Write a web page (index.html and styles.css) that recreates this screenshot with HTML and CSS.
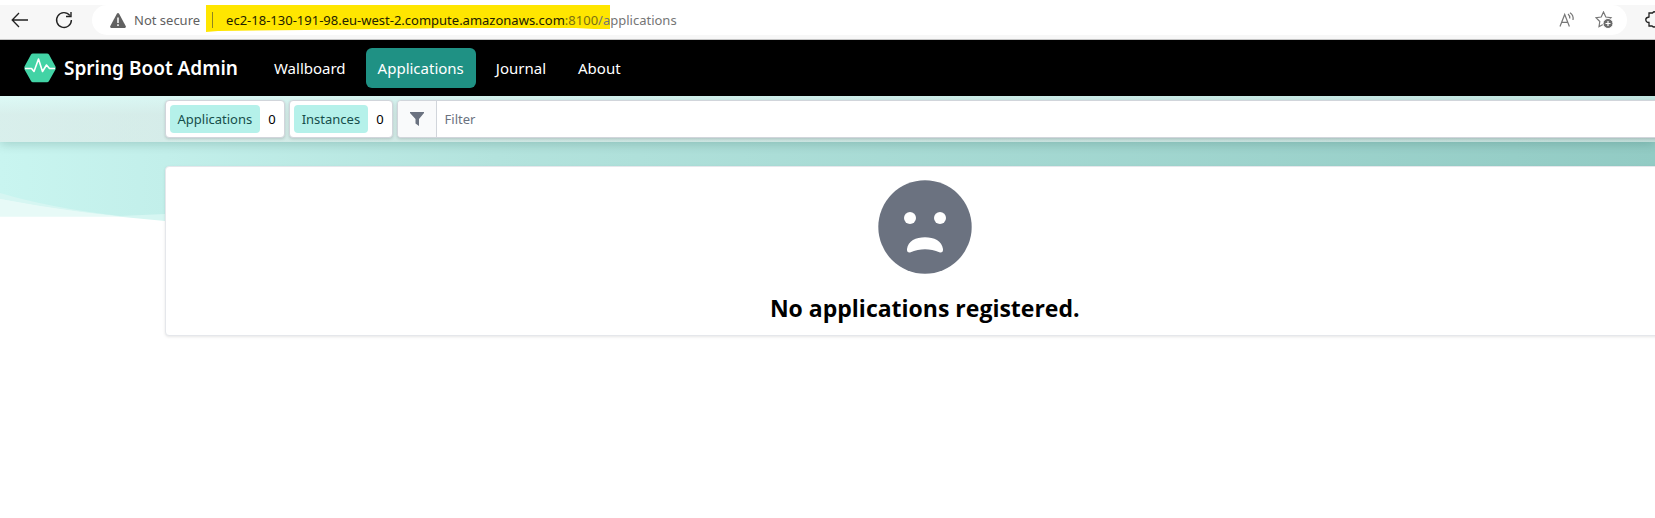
FILE: index.html
```html
<!DOCTYPE html>
<html lang="en">
<head>
<meta charset="utf-8">
<title>Spring Boot Admin</title>
<link rel="stylesheet" href="styles.css">
</head>
<body>
<div class="browser">
  <button class="tool" aria-label="Back"><svg width="18" height="16" viewBox="0 0 18 16"><path d="M17 8H1.500M8 1L1.200 8L8 15" fill="none" stroke="#222" stroke-width="1.300"/></svg></button>
  <button class="tool" aria-label="Refresh"><svg width="18" height="18" viewBox="0 0 18 18"><path d="M16.400 9A7.400 7.400 0 1 1 14.800 4.400M16 1V5.500H11" fill="none" stroke="#222" stroke-width="1.400"/></svg></button>
  <div class="address">
    <svg class="warn" width="16" height="15" viewBox="0 0 16 15"><path d="M7 .6Q8 -.6 9 .6L15.800 13.200Q16.200 14.800 14.800 15H1.200Q-.2 14.800.2 13.200Z" fill="#616161"/><path d="M8 4.500V10M8 11.300V13" stroke="#fff" stroke-width="1.500"/></svg>
    <span class="insecure">Not secure</span>
    <div class="url">
      <svg class="marker" viewBox="0 0 404 27" preserveAspectRatio="none"><path d="M0 0H404V24H388L370 23L250 23L100 25L12 26L0 27Z" fill="#ffe600"/></svg>
      <span class="divider"></span><span class="host">ec2-18-130-191-98.eu-west-2.compute.amazonaws.com<span class="port">:8100</span></span><span class="path">/applications</span>
    </div>
    <button class="tool read" aria-label="Read aloud"><svg width="16" height="16" viewBox="0 0 16 16"><path d="M1 14.500L5.700 2.500L10.400 14.500M2.700 10.300H8.700M9 2Q11 3.500 10.800 6.500M11 .8Q14.800 3.400 14 8" fill="none" stroke="#777" stroke-width="1.200"/></svg></button>
    <button class="tool" aria-label="Add to favorites"><svg width="18" height="18" viewBox="0 0 18 18"><path d="M8.500 1L10.800 6L16 6.700L12.300 10.300L13 15.500L8.500 13.200L4 15.700L4.800 10.500L1 6.700L6.200 6Z" fill="none" stroke="#777" stroke-width="1.200"/><circle cx="13" cy="12.500" r="5" fill="#6a6a6a" stroke="#fff" stroke-width="1"/><path d="M13 10V15M10.500 12.500H15.500" stroke="#fff" stroke-width="1.200"/></svg></button>
  </div>
  <button class="tool ext" aria-label="Extensions"><svg width="16" height="18" viewBox="0 0 16 18"><path d="M16 2H11Q9.500-.5 7.500 2H4V6Q.5 6.500.8 9Q1 11.500 4 11.500V15H7Q9 17 11 15H16" fill="none" stroke="#222" stroke-width="1.300"/></svg></button>
</div>

<header class="navbar">
  <a class="brand" href="#">
    <svg width="32" height="30" viewBox="0 0 32 30"><path d="M9 .5H23Q24.300.5 25 1.600L31.500 13.500Q32 15 31.500 16.500L25 28Q24.300 29.300 23 29.300H9Q7.700 29.300 7 28L.5 16.500Q0 15 .5 13.500L7 1.600Q7.700.5 9 .5Z" fill="#42d3a5"/><path d="M1 15.500H7.500L10 18.500L14.500 6L18.500 18.500L22.500 12L25.500 15.500H31" fill="none" stroke="#fff" stroke-width="1.600" stroke-linejoin="round"/></svg>
    <span>Spring Boot Admin</span>
  </a>
  <nav class="links">
    <a href="#">Wallboard</a>
    <a class="active" href="#">Applications</a>
    <a href="#">Journal</a>
    <a href="#">About</a>
  </nav>
</header>

<main class="main">
  <svg class="wave" viewBox="0 0 1655 150" preserveAspectRatio="none">
    <defs><linearGradient id="sea" x1="0" y1="0" x2="1" y2="0"><stop offset="0" stop-color="#c9f5f0"/><stop offset=".1" stop-color="#c2efea"/><stop offset=".3" stop-color="#b3e3dd"/><stop offset="1" stop-color="#92cbc4"/></linearGradient></defs>
    <path d="M0 0H400V120Q180 120 120 120.500H0Z" fill="#e7faf7"/>
    <path d="M0 0H400V140L165 125Q80 118 0 103Z" fill="#d6f6f2"/>
    <path d="M0 0H1655V110H180L165 118L120 120Q50 112 0 97Z" fill="url(#sea)"/>
    <path d="M0 103Q60 115 120 120.500H0Z" fill="#e7faf7"/>
  </svg>
  <section class="filterbar">
    <div class="stat"><span class="tag">Applications</span><span>0</span></div>
    <div class="stat"><span class="tag">Instances</span><span>0</span></div>
    <div class="search">
      <label for="filter" aria-label="Filter"><svg width="14" height="14" viewBox="0 0 14 14"><path d="M0 0H14V1L9 7V14L5.500 11.500V7L0 1Z" fill="#6b7280"/></svg></label>
      <input id="filter" type="text" placeholder="Filter">
    </div>
  </section>
  <section class="card">
    <svg width="94" height="94" viewBox="0 0 94 94"><circle cx="47" cy="47" r="46.700" fill="#6b7280"/><circle cx="32" cy="38" r="6" fill="#fff"/><circle cx="62" cy="38" r="6" fill="#fff"/><path d="M29 69C30 61 38 57.300 47 57.300S64 61 65 69Q65.300 72.800 62 72.500C51 68.300 43 68.300 32 72.500Q28.700 72.800 29 69Z" fill="#fff"/></svg>
    <h1>No applications registered.</h1>
  </section>
</main>
</body>
</html>
```
FILE: styles.css
```css
* { box-sizing: border-box; }
body {
  margin: 0;
  padding-top: 5px;
  background: #fff;
  color: #000;
  font-family: "Noto Sans", "Open Sans", sans-serif;
  overflow-x: hidden;
}
button { border: 0; padding: 0; background: none; display: flex; }
a { color: inherit; text-decoration: none; }

.browser {
  display: flex;
  align-items: center;
  height: 35px;
  padding: 0 0 4px 11px;
  gap: 26px;
  background: #f7f7f7;
  border-bottom: 1px solid #c4c4c4;
  overflow: hidden;
}
.browser .tool { flex: none; width: 18px; }
.address {
  flex: 1;
  display: flex;
  align-items: center;
  height: 30px;
  padding: 0 14px 0 18px;
  margin-left: -7px;
  background: #fff;
  border-radius: 15px;
  font-size: 13px;
}
.insecure { margin-left: 8px; color: #616161; }
.url {
  position: relative;
  display: flex;
  align-items: center;
  height: 30px;
  margin-left: 6px;
  margin-right: auto;
}
.marker { position: absolute; left: 0; top: 0; width: 404px; height: 27px; }
.divider { position: relative; width: 1px; height: 16px; margin: 0 13px 0 6px; background: #8f8420; }
.host, .path { position: relative; }
.host { color: #222000; }
.port { color: #7a7010; }
.path { color: #757575; }
.read { margin-right: 18px; }
.browser .ext { margin-left: -8px; margin-right: -8px; }

.navbar {
  display: flex;
  align-items: center;
  height: 56px;
  padding-left: 24px;
  gap: 24px;
  background: #000;
  color: #fff;
}
.brand { display: flex; align-items: center; gap: 8px; font-size: 19px; font-weight: 600; }
.links { display: flex; gap: 8px; font-size: 15px; }
.links a { padding: 0 12px; line-height: 40px; border-radius: 6px; }
.links .active { background: #1f9184; }

.main { position: relative; overflow: hidden; }
.wave { position: absolute; left: 0; top: 0; width: 100%; height: 150px; }
.filterbar {
  position: relative;
  display: flex;
  gap: 4px;
  height: 46px;
  padding: 4px 0 4px calc(10% - 1px);
  background: linear-gradient(rgba(240, 255, 253, .5), rgba(229, 234, 232, .55) 40%);
  box-shadow: 0 2px 10px rgba(0, 60, 50, .2);
  font-size: 13px;
}
.stat, .search {
  display: flex;
  align-items: center;
  height: 38px;
  background: #fff;
  border: 1px solid #d1d5db;
  border-radius: 4px;
  box-shadow: 0 1px 3px rgba(0, 0, 0, .15);
}
.stat { padding: 0 8px 0 4px; gap: 8px; }
.tag { padding: 0 8px; line-height: 28px; border-radius: 4px; background: #b5f1ea; color: #164e4a; }
.search { flex: 1; margin-right: -30px; overflow: hidden; }
.search label {
  display: flex;
  align-items: center;
  justify-content: center;
  width: 39px;
  height: 36px;
  background: #f9fafb;
  border-right: 1px solid #d1d5db;
}
.search input { flex: 1; height: 36px; padding: 0 8px; border: 0; outline: 0; background: #fff; font: inherit; }
.search input::placeholder { color: #6b7280; opacity: 1; }
.card {
  position: relative;
  display: flex;
  flex-direction: column;
  align-items: center;
  margin: 24px -30px 40px calc(10% - 1px);
  padding: 13px 0 10px;
  background: #fff;
  border: 1px solid #e5e7eb;
  border-radius: 4px;
  box-shadow: 0 1px 3px rgba(0, 0, 0, .1);
}
h1 { margin: 17px 0 0; font-family: "Open Sans", sans-serif; font-size: 23px; line-height: 34px; font-weight: 700; }
```
